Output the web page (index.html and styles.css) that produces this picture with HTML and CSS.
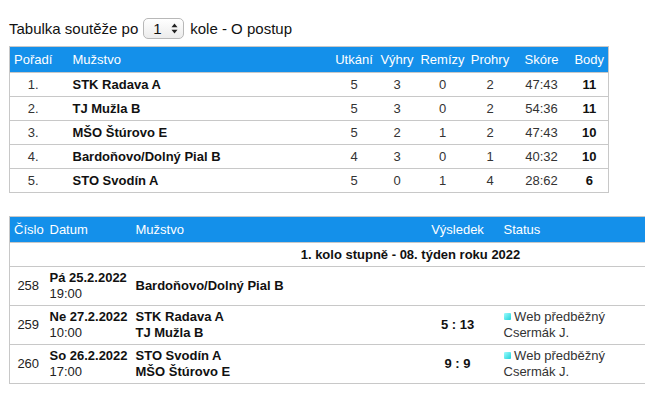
FILE: index.html
```html
<!DOCTYPE html>
<html lang="cs">
<head>
<meta charset="utf-8">
<title>Tabulka soutěže</title>
<link rel="stylesheet" href="styles.css">
</head>
<body>
<div class="page">
  <div class="title">
    <span>Tabulka soutěže po</span>
    <span class="select"><span class="sel-val">1</span><svg class="sel-arrows" width="7" height="11" viewBox="0 0 7 11"><path d="M3.5 0.5 L6.5 4.2 L0.5 4.2 Z" fill="#222"/><path d="M3.5 10.5 L6.5 6.8 L0.5 6.8 Z" fill="#222"/></svg></span>
    <span>kole - O postup</span>
  </div>

  <table class="standings">
    <colgroup>
      <col class="c-rank"><col class="c-team"><col class="c-u"><col class="c-v"><col class="c-r"><col class="c-p"><col class="c-s"><col class="c-b">
    </colgroup>
    <thead>
      <tr><th class="left rank-h">Pořadí</th><th class="left team">Mužstvo</th><th>Utkání</th><th>Výhry</th><th>Remízy</th><th>Prohry</th><th>Skóre</th><th>Body</th></tr>
    </thead>
    <tbody>
      <tr><td>1.</td><td class="team b">STK Radava A</td><td>5</td><td>3</td><td>0</td><td>2</td><td>47:43</td><td class="b">11</td></tr>
      <tr><td>2.</td><td class="team b">TJ Mužla B</td><td>5</td><td>3</td><td>0</td><td>2</td><td>54:36</td><td class="b">11</td></tr>
      <tr><td>3.</td><td class="team b">MŠO Štúrovo E</td><td>5</td><td>2</td><td>1</td><td>2</td><td>47:43</td><td class="b">10</td></tr>
      <tr><td>4.</td><td class="team b">Bardoňovo/Dolný Pial B</td><td>4</td><td>3</td><td>0</td><td>1</td><td>40:32</td><td class="b">10</td></tr>
      <tr><td>5.</td><td class="team b">STO Svodín A</td><td>5</td><td>0</td><td>1</td><td>4</td><td>28:62</td><td class="b">6</td></tr>
    </tbody>
  </table>

  <table class="matches">
    <colgroup>
      <col class="m-num"><col class="m-date"><col class="m-team"><col class="m-res"><col class="m-status">
    </colgroup>
    <thead>
      <tr><th class="left">Číslo</th><th class="left date-h">Datum</th><th class="left">Mužstvo</th><th>Výsledek</th><th class="left">Status</th></tr>
    </thead>
    <tbody>
      <tr class="group"><td colspan="5">1. kolo stupně - 08. týden roku 2022</td></tr>
      <tr>
        <td class="num">258</td>
        <td class="date"><b>Pá 25.2.2022</b><br>19:00</td>
        <td class="b">Bardoňovo/Dolný Pial B</td>
        <td class="res"></td>
        <td></td>
      </tr>
      <tr>
        <td class="num">259</td>
        <td class="date"><b>Ne 27.2.2022</b><br>10:00</td>
        <td class="b">STK Radava A<br>TJ Mužla B</td>
        <td class="res b">5 : 13</td>
        <td class="status"><span class="dot"></span> Web předběžný<br>Csermák J.</td>
      </tr>
      <tr>
        <td class="num">260</td>
        <td class="date"><b>So 26.2.2022</b><br>17:00</td>
        <td class="b">STO Svodín A<br>MŠO Štúrovo E</td>
        <td class="res b">9 : 9</td>
        <td class="status"><span class="dot"></span> Web předběžný<br>Csermák J.</td>
      </tr>
    </tbody>
  </table>
</div>
</body>
</html>
```
FILE: styles.css
```css
html, body {
  margin: 0;
  padding: 0;
}
body {
  font-family: "Liberation Sans", Arial, Helvetica, sans-serif;
  color: #222;
  background: #fff;
  overflow-x: hidden;
}
.page {
  padding: 17px 0 20px 9px;
}
.title {
  display: flex;
  align-items: center;
  height: 23px;
  font-size: 15px;
  color: #111;
  margin-bottom: 6px;
}
.select {
  display: inline-flex;
  align-items: center;
  justify-content: space-between;
  box-sizing: border-box;
  width: 41px;
  height: 21px;
  margin: 0 6px 0 5px;
  padding: 0 5px 0 9px;
  border: 1px solid #b8b8b8;
  border-radius: 5px;
  background: linear-gradient(#ffffff, #ececec);
  font-size: 15px;
  color: #111;
}
.sel-arrows {
  display: block;
}

table {
  border-collapse: collapse;
  table-layout: fixed;
  font-size: 13px;
}
th {
  background: #1490ea;
  color: #fff;
  font-weight: normal;
  height: 25px;
  padding: 0 2px;
  border-top: 1px solid #c8c8c8;
  border-bottom: 1px solid #c8c8c8;
  text-align: center;
  white-space: nowrap;
}
th.left {
  text-align: left;
}
.b {
  font-weight: bold;
  color: #111;
}

/* standings */
.standings {
  width: 600px;
  border: 1px solid #c8c8c8;
}
.standings th.rank-h {
  padding-left: 4px;
}
.standings td {
  height: 23px;
  padding: 0 2px;
  border-bottom: 1px solid #c8c8c8;
  text-align: center;
  color: #333;
}
.standings td.b {
  color: #111;
}
.standings .team {
  text-align: left;
  padding-left: 16px;
}
.c-rank { width: 47px; }
.c-team { width: 275px; }
.c-u { width: 45px; }
.c-v { width: 41px; }
.c-r { width: 50px; }
.c-p { width: 45px; }
.c-s { width: 58px; }
.c-b { width: 38px; }

/* matches */
.matches {
  width: 802px;
  margin-top: 23px;
  border: 1px solid #c8c8c8;
}
.matches th {
  padding: 0 4px;
}
.matches th.date-h {
  padding-left: 3px;
}
.matches td {
  padding: 3px 4px;
  line-height: 16px;
  border-bottom: 1px solid #c8c8c8;
  vertical-align: middle;
  text-align: left;
  color: #222;
  white-space: nowrap;
}
.matches td.date {
  padding-left: 3px;
  padding-right: 0;
}
.matches td b {
  color: #111;
}
.matches td.b {
  color: #111;
}
.matches td.num {
  text-align: center;
  padding: 3px 2px;
}
.matches td.res {
  text-align: center;
}
.matches td.status {
  color: #333;
}
.matches tr.group td {
  height: 17px;
  text-align: center;
  font-weight: bold;
  color: #111;
}
.m-num { width: 37px; }
.m-date { width: 85px; }
.m-team { width: 284px; }
.m-res { width: 84px; }
.m-status { width: 312px; }

.dot {
  display: inline-block;
  width: 7px;
  height: 7px;
  border-radius: 1px;
  background: linear-gradient(135deg, #9ffcff, #1fd3d8);
  vertical-align: 1px;
}
```
